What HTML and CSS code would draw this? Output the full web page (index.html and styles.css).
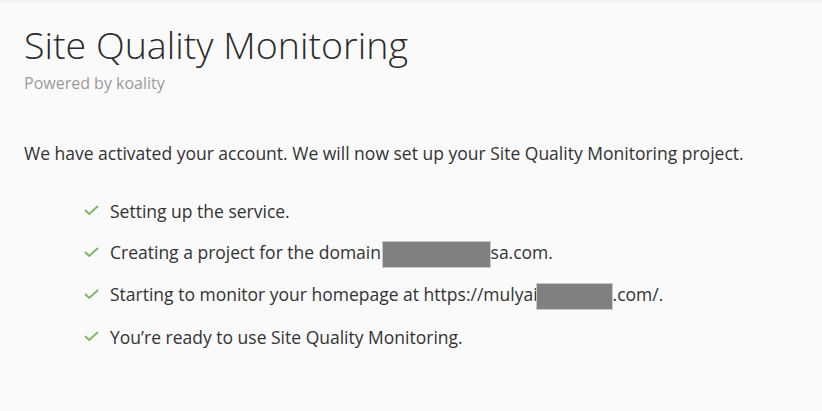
FILE: index.html
```html
<!DOCTYPE html>
<html>
<head>
<meta charset="utf-8">
<link rel="stylesheet" href="styles.css">
</head>
<body>
<div class="topshade"></div>
<main class="page">
  <h1 class="title">Site Quality Monitoring</h1>
  <div class="subtitle">Powered by koality</div>
  <p class="intro">We have activated your account. We will now set up your Site Quality Monitoring project.</p>
  <ul class="steps">
    <li><svg class="check" viewBox="0 0 15 10" width="15" height="10"><path d="M1 5 L5.2 9 L14 1" fill="none" stroke="#7ab55c" stroke-width="1.8"/></svg><span>Setting up the service.</span></li>
    <li><svg class="check" viewBox="0 0 15 10" width="15" height="10"><path d="M1 5 L5.2 9 L14 1" fill="none" stroke="#7ab55c" stroke-width="1.8"/></svg><span>Creating a project for the domain <span class="redact r1"></span>sa.com.</span></li>
    <li><svg class="check" viewBox="0 0 15 10" width="15" height="10"><path d="M1 5 L5.2 9 L14 1" fill="none" stroke="#7ab55c" stroke-width="1.8"/></svg><span>Starting to monitor your homepage at https://mulyai<span class="redact r2"></span>.com/.</span></li>
    <li><svg class="check" viewBox="0 0 15 10" width="15" height="10"><path d="M1 5 L5.2 9 L14 1" fill="none" stroke="#7ab55c" stroke-width="1.8"/></svg><span>You’re ready to use Site Quality Monitoring.</span></li>
  </ul>
</main>
</body>
</html>
```
FILE: styles.css
```css
html, body {
  margin: 0;
  padding: 0;
  background: #fafafa;
  height: 100%;
}
body {
  font-family: "Open Sans", sans-serif;
  color: #333;
  position: relative;
}
.topshade {
  position: absolute;
  top: 0; left: 0; right: 0;
  height: 4px;
  background: linear-gradient(#f0f0f0, #fafafa);
}
.page {
  padding: 23px 24px 0 24px;
}
.title {
  font-weight: 300;
  font-size: 37.6px;
  line-height: 44px;
  margin: 0;
  color: #2b2b2b;
}
.subtitle {
  font-size: 16px;
  color: #9a9a9a;
  margin-top: 6px;
  line-height: 20px;
}
.intro {
  font-size: 17.5px;
  margin: 48px 0 0 0;
  line-height: 24px;
}
.steps {
  list-style: none;
  margin: 34px 0 0 0;
  padding: 0 0 0 60px;
}
.steps li {
  display: flex;
  align-items: center;
  gap: 11px;
  font-size: 17.5px;
  line-height: 24px;
  height: 24px;
  margin-bottom: 18px;
}
.check { flex: none; margin-bottom: 3px; }
.redact {
  display: inline-block;
  background: #808083;
  border: 1px solid #c8c8ca;
  vertical-align: middle;
  height: 27px;
  margin: -3px 0 -2px;
  box-sizing: border-box;
}
.r1 { width: 109px; margin-left: -4px; }
.r2 { width: 77px; margin-left: -2px; }
```
